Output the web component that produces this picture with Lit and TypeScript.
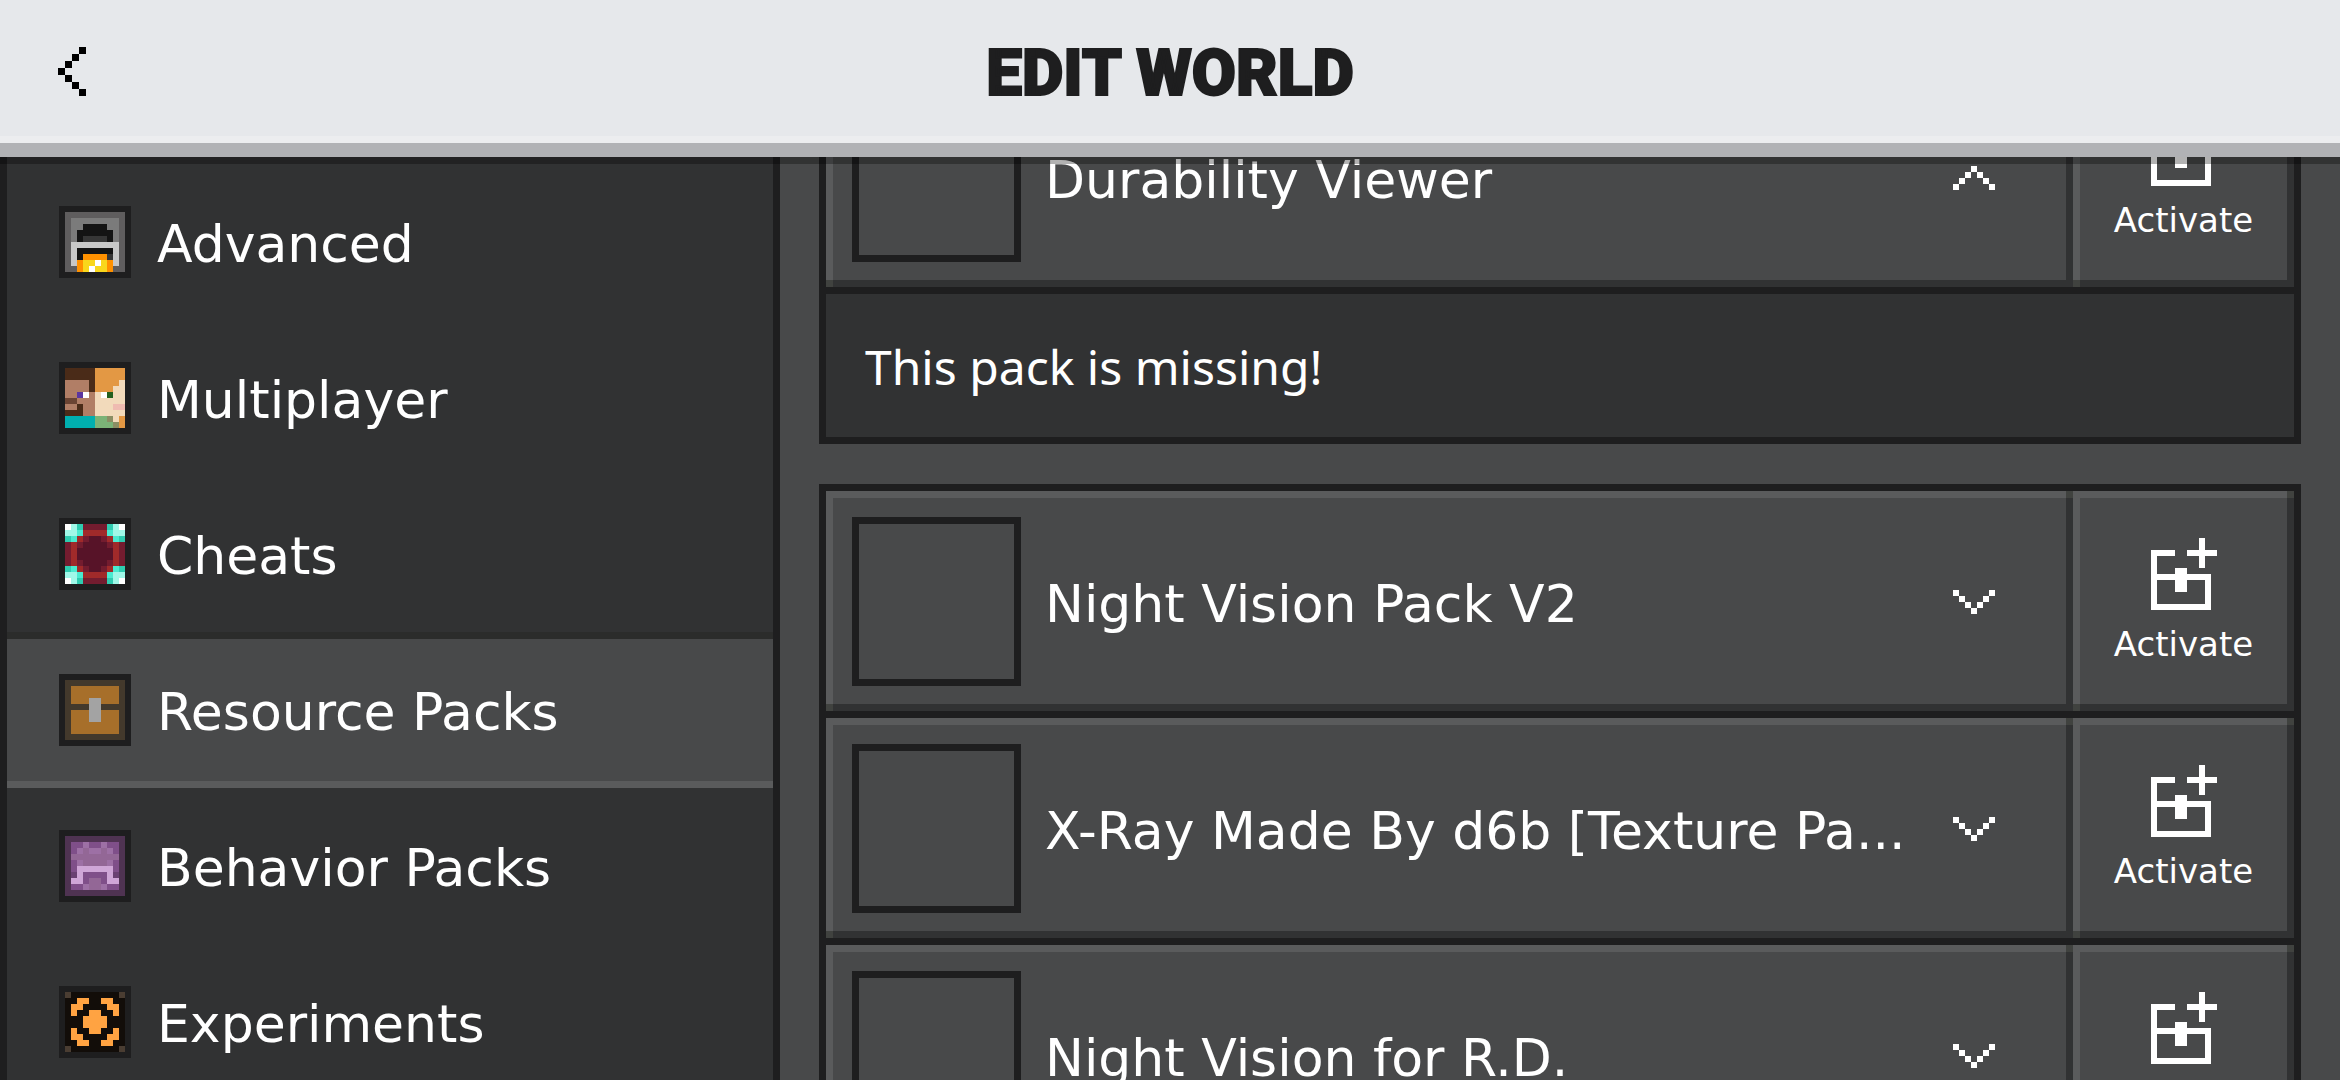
import { LitElement, css, html, svg, nothing } from "lit";
import { customElement, property, state } from "lit/decorators.js";
import { classMap } from "lit/directives/class-map.js";

type Palette = Record<string, string>;

interface Section {
  label: string;
  rows: string[];
  palette: Palette;
}

interface Pack {
  name: string;
  detail?: string;
}

const SECTIONS: Section[] = [
  {
    label: "Advanced",
    rows: [
      "GGGGGGGGGG",
      "GggggggggG",
      "GggKKKKggG",
      "GgKKKKKKgG",
      "GgKddddKgG",
      "GLLLLLLLLG",
      "GLKKKKKKLG",
      "GLKOOOOdLG",
      "GLOYYWYOLG",
      "GGOYWYYOGG",
    ],
    palette: { G: "#5f5d5e", g: "#7b7b7b", K: "#141414", d: "#363636", L: "#c8c8c8", O: "#ff9100", Y: "#f9d71c", W: "#ffffff" },
  },
  {
    label: "Multiplayer",
    rows: [
      "BBBBBOOOOO",
      "BBBBBOOOOO",
      "SSSSBOOOOF",
      "SSSSBOOOFF",
      "SSPWSFWGFF",
      "MMSSSFFFFF",
      "SSBSSFFFKK",
      "BBBSSFFFFF",
      "TTTTTggeFO",
      "TTTTTgggeO",
    ],
    palette: { B: "#4a2b18", O: "#e39844", S: "#b17e66", F: "#f2dabb", P: "#5b35a0", W: "#ffffff", G: "#23601f", M: "#6b4433", K: "#efbbb1", T: "#00afaf", g: "#7bb377", e: "#8b8e64" },
  },
  {
    label: "Cheats",
    rows: [
      "WacRRRRcaW",
      "aatrrrrtaa",
      "ctrRDDRrtc",
      "RrRDDDDRrR",
      "RrDDDDDDrR",
      "RrDDDDDDrR",
      "RrRDDDDRrR",
      "ctrRDDRrtc",
      "aatrrrrtaa",
      "WacRRRRcaW",
    ],
    palette: { W: "#ffffff", a: "#a0f8e8", c: "#2fccb0", t: "#4aead0", R: "#731c2f", r: "#a02a2a", D: "#571328" },
  },
  {
    label: "Resource Packs",
    rows: [
      "bbbbbbbbbb",
      "bOOOOOOOOb",
      "bOOOOOOOOb",
      "bOOOssOOOb",
      "bbbbssbbbb",
      "bOOOssOOOb",
      "bOOOssOOOb",
      "bOOOOOOOOb",
      "bOOOOOOOOb",
      "bbbbbbbbbb",
    ],
    palette: { b: "#43392c", O: "#a76f2a", s: "#a3a3a3" },
  },
  {
    label: "Behavior Packs",
    rows: [
      "pppppppppp",
      "pVVLVVLVVp",
      "pVLmLLmLVp",
      "pmmmmmmmmp",
      "pVLmmmmLVp",
      "pVllllllVp",
      "pqlVVVVlqp",
      "pllVmmVllp",
      "pVVLmmLVVp",
      "pppppppppp",
    ],
    palette: { p: "#4f3352", V: "#7f4f89", L: "#9d70a5", m: "#936796", l: "#cfa6d7", q: "#6a4172" },
  },
  {
    label: "Experiments",
    rows: [
      "cKKKKKKKKc",
      "KKOOKKOOKK",
      "KOOKKKKOOK",
      "KOKKOOKKOK",
      "KKKOOOOKKK",
      "KKKOOOOKKK",
      "KOKKOOKKOK",
      "KOOKKKKOOK",
      "KKOOKKOOKK",
      "cKKKKKKKKc",
    ],
    palette: { c: "#4a3d32", K: "#120d09", O: "#ffa342" },
  },
];

const GROUPS: Pack[][] = [
  [{ name: "Durability Viewer", detail: "This pack is missing!" }],
  [
    { name: "Night Vision Pack V2" },
    { name: "X-Ray Made By d6b [Texture Pa..." },
    { name: "Night Vision for R.D." },
  ],
];

const BACK = ["...#", "..#.", ".#..", "#...", ".#..", "..#.", "...#"];
const DOWN = ["#.....#", ".#...#.", "..#.#..", "...#..."];
const UP = [...DOWN].reverse();
const ACTIVATE = [
  "........#..",
  "........#..",
  "####..#####",
  "#.......#..",
  "#.......#..",
  "#...##.....",
  "##########.",
  "#...##...#.",
  "#...##...#.",
  "#........#.",
  "#........#.",
  "##########.",
];

/** Draws a small bitmap, one unit square per character; "." is transparent. */
@customElement("pixel-art")
export class PixelArt extends LitElement {
  @property({ attribute: false }) rows: string[] = [];
  @property({ attribute: false }) palette: Palette = { "#": "currentColor" };

  static styles = css`
    :host {
      display: block;
      flex: none;
    }
    .art {
      display: block;
      width: 100%;
      height: 100%;
    }
  `;

  render() {
    const width = this.rows[0]?.length ?? 0;
    const cells = this.rows.flatMap((row, y) =>
      [...row].map((key, x) =>
        this.palette[key]
          ? svg`<rect x=${x} y=${y} width="1" height="1" fill=${this.palette[key]}></rect>`
          : nothing
      )
    );
    return html`<svg
      class="art"
      viewBox="0 0 ${width} ${this.rows.length}"
      shape-rendering="crispEdges"
      aria-hidden="true"
    >
      ${cells}
    </svg>`;
  }
}

@customElement("pack-row")
export class PackRow extends LitElement {
  @property({ attribute: false }) pack: Pack = { name: "" };
  @state() private open = true;

  static styles = css`
    :host {
      display: block;
    }
    .row {
      display: grid;
      grid-template-columns: minmax(0, 1fr) 221px;
    }
    button {
      margin: 0;
      border: 0;
      color: #ffffff;
      font-family: "DejaVu Sans", "Noto Sans", sans-serif;
      cursor: pointer;
      background:
        linear-gradient(#40423f, #40423f) left bottom / 7px 7px no-repeat,
        linear-gradient(#40423f, #40423f) right top / 7px 7px no-repeat,
        linear-gradient(#313233, #313233) left bottom / 100% 7px no-repeat,
        linear-gradient(#313233, #313233) right top / 7px 100% no-repeat,
        linear-gradient(#5a5b5c, #5a5b5c) left top / 100% 7px no-repeat,
        linear-gradient(#5a5b5c, #5a5b5c) left top / 7px 100% no-repeat,
        #48494a;
    }
    .summary {
      display: flex;
      align-items: center;
      gap: 24px;
      padding: 26px 78px 25px 26px;
      text-align: left;
    }
    .thumb {
      flex: none;
      box-sizing: border-box;
      width: 169px;
      height: 169px;
      border: 7px solid #1e1e1f;
    }
    .name {
      flex: 1;
      min-width: 0;
      overflow: hidden;
      padding-top: 4px;
      white-space: nowrap;
      font-size: 52px;
      line-height: 60px;
    }
    .chevron {
      width: 42px;
      height: 24px;
    }
    .activate {
      display: flex;
      flex-direction: column;
      align-items: center;
      justify-content: center;
      gap: 14px;
      padding: 0;
      font-size: 34px;
      line-height: 40px;
    }
    .plus {
      width: 66px;
      height: 72px;
    }
    .detail {
      margin: 0;
      border-top: 7px solid #1e1e1f;
      padding: 40px 39px 37px;
      background: #313233;
      color: #ffffff;
      font-family: "Noto Sans", sans-serif;
      font-size: 48px;
      line-height: 66px;
    }
  `;

  render() {
    const shown = Boolean(this.pack.detail) && this.open;
    return html`
      <div class="row">
        <button
          class="summary"
          aria-expanded=${shown ? "true" : "false"}
          @click=${() => (this.open = !this.open)}
        >
          <span class="thumb"></span>
          <span class="name">${this.pack.name}</span>
          <pixel-art class="chevron" .rows=${shown ? UP : DOWN}></pixel-art>
        </button>
        <button class="activate">
          <pixel-art class="plus" .rows=${ACTIVATE}></pixel-art>
          <span>Activate</span>
        </button>
      </div>
      ${shown ? html`<p class="detail">${this.pack.detail}</p>` : nothing}
    `;
  }
}

@customElement("app-root")
export class AppRoot extends LitElement {
  @state() private current = "Resource Packs";

  static styles = css`
    :host {
      display: flex;
      flex-direction: column;
      height: 100vh;
      overflow: hidden;
      background: #48494a;
      color: #ffffff;
      font-family: "DejaVu Sans", "Noto Sans", sans-serif;
    }
    .bar {
      flex: none;
      display: grid;
      grid-template-columns: 1fr auto 1fr;
      align-items: center;
      padding: 34px 58px;
      border-bottom: 14px solid #b1b2b5;
      background: #e6e8eb;
      box-shadow: inset 0 -7px #ecedef;
      color: #1e1e1f;
    }
    .back {
      justify-self: start;
      padding: 0;
      border: 0;
      background: none;
      color: #000000;
      cursor: pointer;
    }
    .arrow {
      width: 28px;
      height: 49px;
    }
    .title {
      margin: 0;
      padding-top: 4px;
      font-family: Roboto, "Open Sans", sans-serif;
      font-size: 64px;
      font-weight: 900;
      line-height: 71px;
      -webkit-text-stroke: 2px #1e1e1f;
    }
    .body {
      position: relative;
      flex: 1;
      min-height: 0;
      display: grid;
      grid-template-columns: 1fr 2fr;
      overflow: hidden;
    }
    .body::after {
      content: "";
      position: absolute;
      inset: 0 0 auto;
      height: 7px;
      background: rgba(0, 0, 0, 0.3);
      pointer-events: none;
    }
    .side {
      box-sizing: border-box;
      min-height: 0;
      overflow: hidden;
      padding-top: 7px;
      border: solid #1e1e1f;
      border-width: 0 7px;
      background: #313233;
    }
    .item {
      box-sizing: border-box;
      display: flex;
      align-items: center;
      gap: 26px;
      width: 100%;
      height: 156px;
      padding: 0 52px;
      border: solid transparent;
      border-width: 7px 0;
      background: none;
      color: inherit;
      font-family: inherit;
      font-size: 52px;
      line-height: 60px;
      text-align: left;
      white-space: nowrap;
      cursor: pointer;
    }
    .selected {
      border-top-color: #2b2c2b;
      border-bottom-color: #5a5b5c;
      background: #48494a;
    }
    .icon {
      width: 60px;
      height: 60px;
      border: 6px solid #1e1e1f;
    }
    .label {
      padding-top: 4px;
    }
    .main {
      min-width: 0;
      min-height: 0;
      overflow: hidden;
      padding: 0 39px;
    }
    /* The list rests partly scrolled beneath the title bar. */
    .packs {
      display: flex;
      flex-direction: column;
      gap: 40px;
      margin-top: -97px;
    }
    .group {
      display: flex;
      flex-direction: column;
      gap: 7px;
      border: 7px solid #1e1e1f;
      background: #1e1e1f;
    }
  `;

  render() {
    return html`
      <header class="bar">
        <button class="back" aria-label="Back">
          <pixel-art class="arrow" .rows=${BACK}></pixel-art>
        </button>
        <h1 class="title">EDIT WORLD</h1>
      </header>
      <div class="body">
        <nav class="side">
          ${SECTIONS.map(
            (s) => html`<button
              class=${classMap({ item: true, selected: s.label === this.current })}
              aria-current=${s.label === this.current ? "page" : "false"}
              @click=${() => (this.current = s.label)}
            >
              <pixel-art class="icon" .rows=${s.rows} .palette=${s.palette}></pixel-art>
              <span class="label">${s.label}</span>
            </button>`
          )}
        </nav>
        <main class="main">
          <div class="packs">
            ${GROUPS.map(
              (g) => html`<section class="group">
                ${g.map((p) => html`<pack-row .pack=${p}></pack-row>`)}
              </section>`
            )}
          </div>
        </main>
      </div>
    `;
  }
}
